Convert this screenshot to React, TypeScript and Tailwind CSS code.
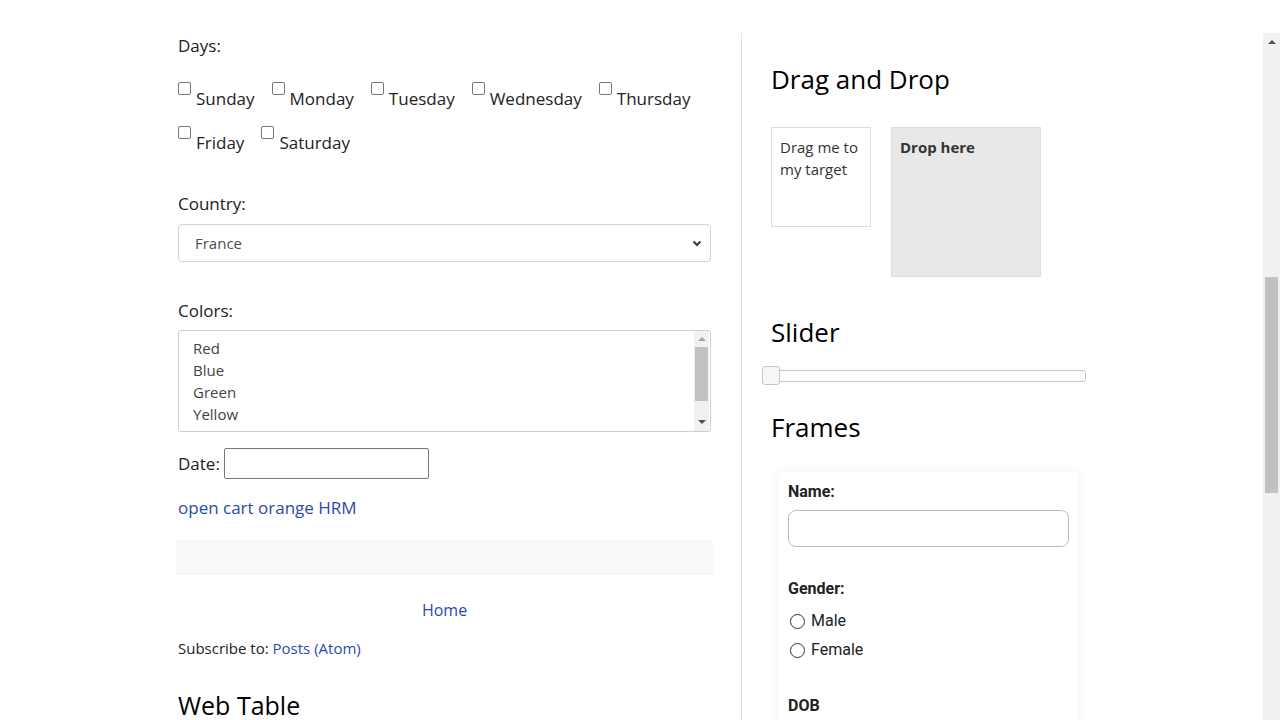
import React from 'react';

const DAYS_ROW1 = ['Sunday', 'Monday', 'Tuesday', 'Wednesday', 'Thursday'];
const DAYS_ROW2 = ['Friday', 'Saturday'];
const COLORS = ['Red', 'Blue', 'Green', 'Yellow', 'White'];

const sans = { fontFamily: '"Open Sans", "Noto Sans", sans-serif' };

function DayBox({ label }: { label: string }) {
  return (
    <label className="flex items-start mr-[17px]">
      <input type="checkbox" className="appearance-none w-[13px] h-[13px] border border-[#767676] rounded-[2px] bg-white mt-0 shrink-0" />
      <span className="ml-[5px] mt-[5px] text-[17px] leading-[24px] text-[#222]">{label}</span>
    </label>
  );
}

function Chevron() {
  return (
    <svg width="10" height="8" viewBox="0 0 10 8">
      <path d="M1.5 2.5 L5 6 L8.5 2.5" fill="none" stroke="#343a40" strokeWidth="2" />
    </svg>
  );
}

function LeftColumn() {
  return (
    <div className="w-[537px] ml-[176px] shrink-0 flex flex-col">
      <div className="px-[2px] flex flex-col">
        <div className="mt-[1px] text-[17px] leading-[24px] text-[#222]">Days:</div>
        <div className="mt-[24px] flex">
          {DAYS_ROW1.map(d => <DayBox key={d} label={d} />)}
        </div>
        <div className="mt-[15px] flex">
          {DAYS_ROW2.map(d => <DayBox key={d} label={d} />)}
        </div>

        <div className="mt-[37px] text-[17px] leading-[24px] text-[#222]">Country:</div>
        <div className="mt-[8px] h-[38px] w-[533px] border border-[#ced4da] rounded-[4px] bg-white flex items-center justify-between pl-[16px] pr-[8px]">
          <span className="text-[15px] text-[#495057]">France</span>
          <Chevron />
        </div>

        <div className="mt-[37px] text-[17px] leading-[24px] text-[#222]">Colors:</div>
        <div className="mt-[7px] h-[102px] w-[533px] border border-[#cfcfcf] rounded-[3px] bg-white flex overflow-hidden">
          <div className="flex-1 pl-[14px] pt-[6px] overflow-hidden">
            {COLORS.map(c => (
              <div key={c} className="text-[15px] leading-[22px] text-[#444]">{c}</div>
            ))}
          </div>
          <div className="w-[15px] mr-[1px] bg-[#f1f1f1] flex flex-col items-center">
            <div className="h-[16px] flex items-center justify-center">
              <div className="w-0 h-0 border-l-[4px] border-r-[4px] border-b-[4px] border-l-transparent border-r-transparent border-b-[#a3a3a3]" />
            </div>
            <div className="w-[13px] h-[54px] bg-[#c1c1c1]" />
            <div className="flex-1" />
            <div className="h-[18px] flex items-center justify-center">
              <div className="w-0 h-0 border-l-[4px] border-r-[4px] border-t-[4px] border-l-transparent border-r-transparent border-t-[#505050]" />
            </div>
          </div>
        </div>

        <div className="mt-[16px] flex items-center">
          <span className="text-[17px] leading-[24px] text-[#222]">Date:</span>
          <input type="text" className="ml-[4px] w-[205px] h-[31px] border border-[#767676] rounded-[2px] bg-white" />
        </div>

        <a className="mt-[16px] text-[17px] leading-[26px] text-[#2a4ab0]">open cart orange HRM</a>
      </div>

      <div className="mt-[19px] h-[34px] bg-[#f9f9f9] border-b border-[#eeeeee]" />

      <div className="px-[2px] flex flex-col">
        <div className="mt-[24px] text-center text-[16px] leading-[24px] text-[#2a4ab0]">Home</div>
        <div className="mt-[15px] text-[15px] leading-[22px] text-[#222]">
          Subscribe to: <a className="text-[#2a4ab0]">Posts (Atom)</a>
        </div>
        <h2 className="mt-[28px] text-[25px] leading-[36px] text-black">Web Table</h2>
      </div>
    </div>
  );
}

function RightColumn() {
  return (
    <div className="flex-1 border-l border-[#e0e0e0] pl-[29px] flex flex-col">
      <h2 className="mt-[28px] text-[26px] leading-[36px] text-black">Drag and Drop</h2>
      <div className="mt-[30px] flex items-start gap-[20px]">
        <div className="w-[100px] h-[100px] border border-[#dddddd] bg-white px-[8px] pt-[8px] text-[15px] leading-[22px] text-[#333]">
          Drag me to my target
        </div>
        <div className="w-[150px] h-[150px] border border-[#dddddd] bg-[#e8e8e8] px-[8px] pt-[8px] text-[15px] leading-[22px] font-bold text-[#333]">
          Drop here
        </div>
      </div>

      <h2 className="mt-[37px] text-[26px] leading-[36px] text-black">Slider</h2>
      <div className="mt-[16px] ml-[-9px] w-[324px] h-[19px] relative">
        <div className="mt-[4px] h-[12px] border border-[#c5c5c5] rounded-[3px] bg-white" />
        <div className="absolute left-0 top-0 w-[18px] h-[19px] border border-[#c5c5c5] rounded-[3px] bg-[#f6f6f6]" />
      </div>

      <h2 className="mt-[24px] text-[26px] leading-[36px] text-black">Frames</h2>
      <div
        className="mt-[27px] ml-[8px] w-[299px] h-[260px] bg-white shadow-[0_0_10px_rgba(0,0,0,0.07)] px-[9px] pt-[9px] flex flex-col"
        style={{ fontFamily: 'Roboto, "Liberation Sans", sans-serif' }}
      >
        <div className="text-[16px] leading-[22px] font-bold text-[#222]">Name:</div>
        <input type="text" className="mt-[7px] w-[281px] h-[37px] border border-[#bbbbbb] rounded-[8px] bg-white" />
        <div className="mt-[31px] text-[16px] leading-[22px] font-bold text-[#222]">Gender:</div>
        <label className="mt-[10px] flex items-center text-[16px] leading-[22px] text-[#222]">
          <span className="ml-[2px] w-[15px] h-[15px] rounded-full border border-[#333] bg-white" />
          <span className="ml-[6px]">Male</span>
        </label>
        <label className="mt-[7px] flex items-center text-[16px] leading-[22px] text-[#222]">
          <span className="ml-[2px] w-[15px] h-[15px] rounded-full border border-[#333] bg-white" />
          <span className="ml-[6px]">Female</span>
        </label>
        <div className="mt-[34px] text-[16px] leading-[22px] font-bold text-[#222]">DOB</div>
      </div>
    </div>
  );
}

function PageScrollbar() {
  return (
    <div className="w-[17px] shrink-0 bg-[#f1f1f1] flex flex-col items-center">
      <div className="h-[17px] flex items-center justify-center">
        <div className="w-0 h-0 border-l-[4px] border-r-[4px] border-b-[4px] border-l-transparent border-r-transparent border-b-[#505050]" />
      </div>
      <div className="mt-[227px] w-[13px] h-[216px] bg-[#c1c1c1]" />
    </div>
  );
}

export default function App() {
  return (
    <div className="w-[1280px] h-[720px] overflow-hidden bg-white flex flex-col" style={sans}>
      <div className="h-[33px] shrink-0" />
      <div className="flex-1 flex">
        <div className="flex-1 flex">
          <LeftColumn />
          <div className="w-[28px] shrink-0" />
          <RightColumn />
        </div>
        <PageScrollbar />
      </div>
    </div>
  );
}
